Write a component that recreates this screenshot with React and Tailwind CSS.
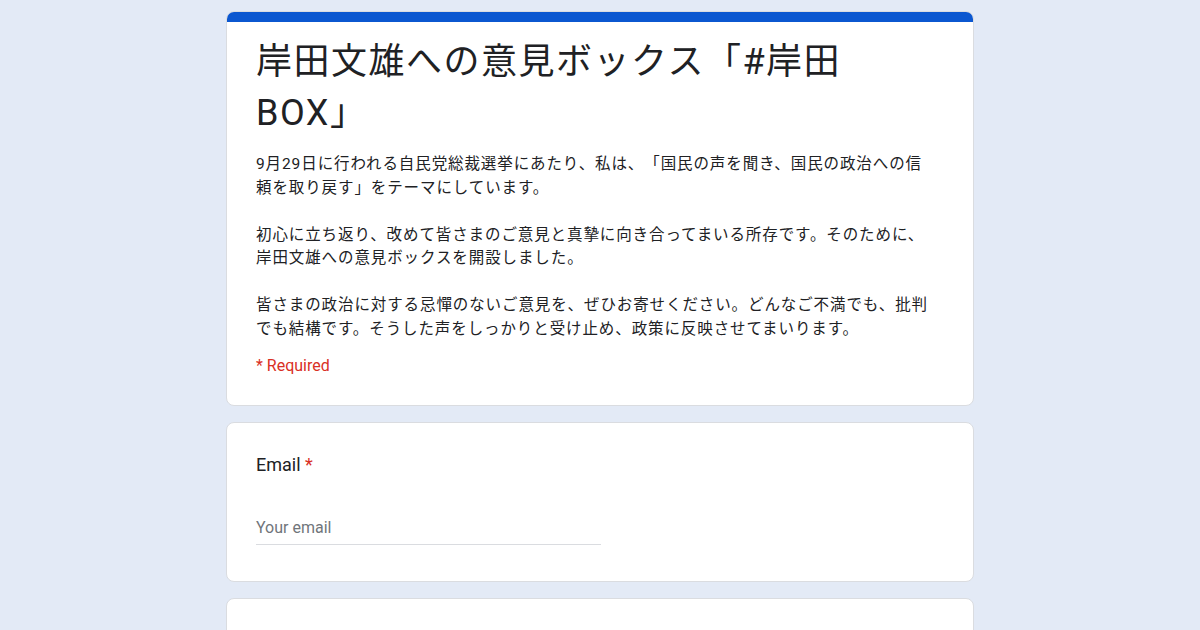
const jp = { fontFamily: 'Roboto, "Noto Sans CJK JP", sans-serif' };

const Card = ({ children, className = '' }) => (
  <div className={`w-[748px] shrink-0 bg-white rounded-lg border border-[#dadce0] ${className}`}>
    {children}
  </div>
);

export default function App() {
  return (
    <div className="h-[630px] overflow-hidden bg-[#e3eaf6] flex flex-col items-center pt-[11px] gap-4" style={jp}>
      {/* Header card */}
      <Card className="overflow-hidden">
        <div className="h-[10px] bg-[#0b57d0]" />
        <div className="pl-[29px] pr-[29px] pt-[15px] pb-[29px]">
          <h1 className="text-[36px] leading-[51px] tracking-[1.5px] text-[#202124] font-normal">
            岸田文雄への意見ボックス「#岸田
            <br />
            BOX」
          </h1>
          <div className="mt-[14px] text-[15.5px] leading-[23.5px] tracking-[0.9px] text-[#202124] [text-spacing-trim:space-all]">
            <p>
              9月29日に行われる自民党総裁選挙にあたり、私は、「国民の声を聞き、国民の政治への信
              <br />
              頼を取り戻す」をテーマにしています。
            </p>
            <p className="mt-[23.5px]">
              初心に立ち返り、改めて皆さまのご意見と真摯に向き合ってまいる所存です。そのために、
              <br />
              岸田文雄への意見ボックスを開設しました。
            </p>
            <p className="mt-[23.5px]">
              皆さまの政治に対する忌憚のないご意見を、ぜひお寄せください。どんなご不満でも、批判
              <br />
              でも結構です。そうした声をしっかりと受け止め、政策に反映させてまいります。
            </p>
          </div>
          <p className="mt-[15px] text-[16px] leading-5 text-[#d93025]">* Required</p>
        </div>
      </Card>

      {/* Email card */}
      <Card className="h-[160px] px-[29px] pt-[30px]">
        <div className="text-[18px] leading-6 text-[#202124]">
          Email <span className="text-[#d93025]">*</span>
        </div>
        <div className="mt-[39px] w-[345px] border-b border-[#dadce0] pb-[4px]">
          <span className="text-[16px] leading-6 text-[#70757a]">Your email</span>
        </div>
      </Card>

      {/* Next card (cut off) */}
      <Card className="h-[120px]" />
    </div>
  );
}
